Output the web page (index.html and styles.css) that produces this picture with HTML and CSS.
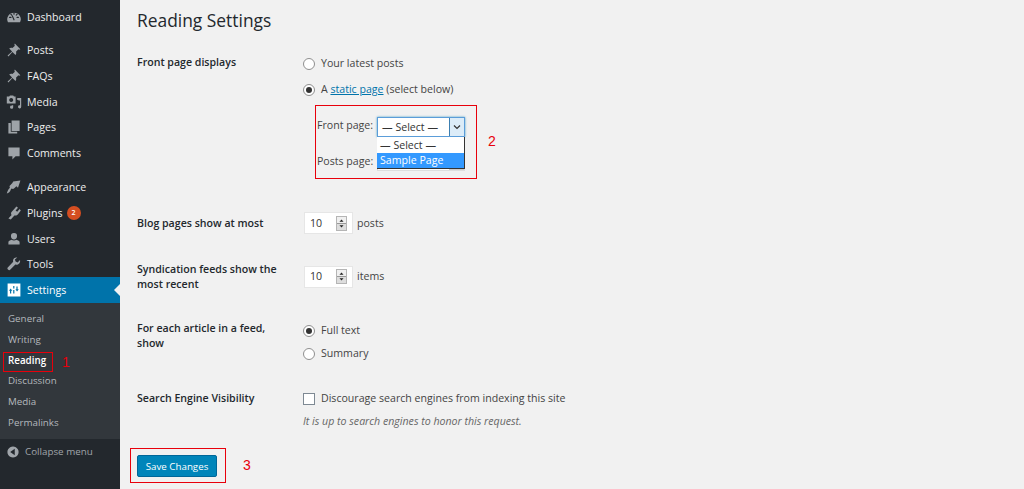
FILE: index.html
```html
<!DOCTYPE html>
<html lang="en">
<head>
<meta charset="utf-8">
<title>Reading Settings</title>
<link rel="stylesheet" href="styles.css">
</head>
<body>
<div class="app">
  <nav class="sidebar">
    <ul class="menu first">
      <li><svg class="ico" viewBox="0 0 20 20"><path d="M2.500 16.500a8.500 8 0 1 1 15 0z"/><path d="M6 6.500l1.200 1.200M10 4.500v2M14 6.500l-1.200 1.200M4.500 10.500h1.700M13.800 10.500h1.700M10 13.500l-2.200-5" stroke="#23282d" stroke-width="1.400" stroke-linecap="round" fill="none"/></svg>Dashboard</li>
    </ul>
    <ul class="menu">
      <li><svg class="ico" viewBox="0 0 20 20"><path d="M11 2l7 7-1.500.8-1-.8-3 3.200c.6 1.500.3 3-.6 4L8 12.400 3 18l-1-1 5.600-5L4 8.200c1-.9 2.500-1.200 4-.6l3.200-3-.8-1z"/></svg>Posts</li>
      <li><svg class="ico" viewBox="0 0 20 20"><path d="M11 2l7 7-1.500.8-1-.8-3 3.200c.6 1.500.3 3-.6 4L8 12.400 3 18l-1-1 5.600-5L4 8.200c1-.9 2.500-1.200 4-.6l3.200-3-.8-1z"/></svg>FAQs</li>
      <li><svg class="ico" viewBox="0 0 20 20"><path fill-rule="evenodd" d="M1 3h3l1-1h4l1 1h2v9H1zM6.500 5a2.500 2.500 0 1 0 .01 0zM14 5h5v11a2 2 0 1 1-1.500-1.900V8h-2v-.5H14zM9 14v2.500a2 2 0 1 1-1.500-1.900V14z"/></svg>Media</li>
      <li><svg class="ico" viewBox="0 0 20 20"><path d="M7 2h10v13H7zM3 5h3v11h8v2H3z"/></svg>Pages</li>
      <li><svg class="ico" viewBox="0 0 20 20"><path d="M3 3h14v11h-5l-4 4v-4H3z"/></svg>Comments</li>
    </ul>
    <ul class="menu">
      <li><svg class="ico" viewBox="0 0 20 20"><path d="M9 3l9-1-3 9-2-2-3 3c-1 1-2 .5-3 0l-1 1c-.5 3-3 4.500-5 5 1-2 1-4 3-6l1-1c-.500-1-1-2 0-3l3-3z"/></svg>Appearance</li>
      <li><svg class="ico" viewBox="0 0 20 20"><path d="M13 2l2 1.500-3 3.500 2 1.500 3-3.500 1.500 2-3.500 4.500c-1 1.500-3 2-4.500 1.500L6 18l-3-1 4-4.500C6 11 6 9 7.500 8z"/></svg>Plugins<span class="badge">2</span></li>
      <li><svg class="ico" viewBox="0 0 20 20"><path d="M10 2.500a3.800 3.800 0 0 1 3.800 4c0 2.500-1.500 4-3.800 4s-3.800-1.500-3.800-4a3.800 3.800 0 0 1 3.800-4zM3 17v-3c0-1.500 2-2.500 4-3 1.500 1.200 4.500 1.200 6 0 2 .5 4 1.500 4 3v3z"/></svg>Users</li>
      <li><svg class="ico" viewBox="0 0 20 20"><path d="M17.500 5l-3 3-2.500-1-.9-2.500 3-2.500c-2.500-.7-5 .8-5.300 3.300-.1.800 0 1.500.2 2L2.500 14c-1 1-1 2 0 3s2.200 1 3 0l6.200-6.300c2.800.9 6.800-1.200 5.800-5.700z"/></svg>Tools</li>
      <li class="current"><svg class="ico" viewBox="0 0 20 20"><path fill-rule="evenodd" d="M2 2h16v16H2zM5 14.500h1.500V11H8L5.700 8 3.800 11H5zM13 5.500h1.500V9H16l-2.200 3-2-3H13zM9 8h1.500V5H9zM9 14.500h1.500V10H9z"/></svg>Settings</li>
    </ul>
    <ul class="submenu">
      <li>General</li>
      <li>Writing</li>
      <li class="active">Reading<span class="mark mark-one"></span><span class="num num-one">1</span></li>
      <li>Discussion</li>
      <li>Media</li>
      <li>Permalinks</li>
    </ul>
    <div class="collapse"><svg class="ico-small" viewBox="0 0 20 20"><path fill-rule="evenodd" d="M10 2a8 8 0 1 1-.01 0zM12.500 5.500L6 10l6.500 4.500z"/></svg>Collapse menu</div>
  </nav>

  <main class="content">
    <h1>Reading Settings</h1>

    <section class="row row-front">
      <div class="label">Front page displays</div>
      <div class="field">
        <div class="option"><span class="radio"></span>Your latest posts</div>
        <div class="option second"><span class="radio on"></span><span>A <a href="#">static page</a> (select below)</span></div>
        <div class="pickers">
          <div class="picker picker-one">
            <span class="picker-label">Front page:</span>
            <div class="select"><span class="select-text">— Select —</span><span class="select-btn"><svg viewBox="0 0 10 10"><path d="M2 3.500l3 3 3-3" fill="none" stroke="#333" stroke-width="1.200"/></svg></span>
              <div class="dropdown">
                <div class="dd-item">— Select —</div>
                <div class="dd-item hl">Sample Page</div>
              </div>
            </div>
          </div>
          <div class="picker picker-two">
            <span>Posts page:</span>
            <div class="select-behind"><span class="behind-btn"></span></div>
          </div>
          <span class="mark mark-two"></span><span class="num num-two">2</span>
        </div>
      </div>
    </section>

    <section class="row row-blog">
      <div class="label">Blog pages show at most</div>
      <div class="field inline"><span class="number"><span>10</span><span class="spin"><svg viewBox="0 0 11 15"><path d="M5.500 2.500l2.500 3H3zM5.500 12.500l2.500-3H3z" fill="#222"/></svg></span></span>posts</div>
    </section>

    <section class="row row-feed">
      <div class="label">Syndication feeds show the most recent</div>
      <div class="field inline"><span class="number"><span>10</span><span class="spin"><svg viewBox="0 0 11 15"><path d="M5.500 2.500l2.500 3H3zM5.500 12.500l2.500-3H3z" fill="#222"/></svg></span></span>items</div>
    </section>

    <section class="row row-article">
      <div class="label">For each article in a feed, show</div>
      <div class="field">
        <div class="option"><span class="radio on"></span>Full text</div>
        <div class="option third"><span class="radio"></span>Summary</div>
      </div>
    </section>

    <section class="row row-search">
      <div class="label">Search Engine Visibility</div>
      <div class="field">
        <div class="option"><span class="check"></span>Discourage search engines from indexing this site</div>
        <p class="note">It is up to search engines to honor this request.</p>
      </div>
    </section>

    <div class="actions">
      <button class="save" type="button">Save Changes</button>
      <span class="mark mark-three"></span><span class="num num-three">3</span>
    </div>
  </main>
</div>
</body>
</html>
```

FILE: styles.css
```css
* { box-sizing: border-box; }
html, body { margin: 0; height: 100%; }
body {
  font-family: "Open Sans", sans-serif;
  font-size: 10.600px;
  color: #444;
  background: #f1f1f1;
  overflow: hidden;
}
.app { display: flex; height: 489px; }

/* sidebar */
.sidebar { width: 120px; flex: none; background: #23282d; color: #eee; }
.menu, .submenu { list-style: none; margin: 0; padding: 0; }
.menu.first { padding-top: 4px; margin-bottom: 8px; }
.menu + .menu { margin-top: 9px; }
.menu.first + .menu { margin-top: 0; }
.menu li {
  position: relative;
  display: flex;
  align-items: center;
  height: 25.6px;
  color: #eee;
}
.ico { width: 16px; height: 16px; margin: 0 5px 0 6px; fill: #9ea3a8; flex: none; }
.menu .current { background: #0073aa; color: #fff; }
.current .ico { fill: #fff; }
.current::after {
  content: "";
  position: absolute;
  right: 0;
  top: 7px;
  border: 6px solid transparent;
  border-right-color: #f1f1f1;
  border-left-width: 0;
}
.badge {
  width: 14px;
  height: 14px;
  margin-left: 4px;
  border-radius: 50%;
  background: #d54e21;
  color: #fff;
  font-size: 7px;
  font-weight: 600;
  line-height: 14px;
  text-align: center;
}
.submenu { background: #32373c; padding: 6.400px 0 4.800px; }
.submenu li {
  position: relative;
  height: 20.8px;
  padding-left: 8px;
  font-size: 9.800px;
  line-height: 20.800px;
  color: #b4b9be;
}
.submenu .active { color: #fff; font-weight: 600; }
.collapse {
  display: flex;
  align-items: center;
  height: 26px;
  font-size: 9.800px;
  color: #a0a5aa;
}
.ico-small { width: 14px; height: 14px; margin: 0 5px 0 6px; fill: #a0a5aa; }

/* annotations */
.mark { position: absolute; border: 1px solid #e8000b; pointer-events: none; }
.num { position: absolute; color: #e8000b; font-family: "Liberation Sans", sans-serif; font-size: 14px; font-weight: 400; line-height: 16px; }
.mark-one { left: 3px; top: 1px; width: 50px; height: 20px; }
.num-one { left: 62px; top: 3px; }
.mark-two { left: 12px; top: 0; width: 162px; height: 74px; }
.num-two { left: 185px; top: 28px; }
.mark-three { left: 10px; top: 0; width: 96px; height: 35px; }
.num-three { left: 123px; top: 9px; }

/* content */
.content { flex: 1; min-width: 0; padding-left: 17px; }
h1 { margin: 0; padding-top: 8px; font-size: 17.400px; font-weight: 400; line-height: 24px; color: #23282d; }
.row { display: grid; grid-template-columns: 166px 1fr; }
.label { font-weight: 600; line-height: 15px; color: #23282d; padding-right: 20px; }
.field { line-height: 15px; }
.row-front { margin-top: 23px; }
.row-front .field { padding-top: 1px; }
.row-blog { margin-top: 33px; }
.row-feed { margin-top: 27px; }
.row-article { margin-top: 31px; }
.row-search { margin-top: 30px; }
.row-blog .label { padding-top: 4px; }
.row-feed .label { padding-top: 1px; }
.row-article .label { margin-top: -2px; }
.option { display: flex; align-items: center; height: 15px; }
.option.second { margin-top: 11px; }
.option.third { margin-top: 8px; }
.radio, .check {
  width: 12px;
  height: 12px;
  margin-right: 6px;
  border: 1px solid #8f8f8f;
  background: #fff;
  flex: none;
}
.radio { border-radius: 50%; position: relative; }
.radio.on::after {
  content: "";
  position: absolute;
  inset: 2px;
  border-radius: 50%;
  background: #333;
}
a { color: #0073aa; }
.pickers { position: relative; margin-top: 8px; height: 74px; }
.picker { display: flex; align-items: center; position: absolute; left: 14px; }
.picker-one { top: 12px; z-index: 2; }
.picker-one .picker-label { margin-top: -3px; }
.picker-two { top: 46px; }
.select, .select-behind {
  position: relative;
  display: flex;
  align-items: stretch;
  flex: none;
  width: 88px;
  height: 20px;
  margin-left: 4px;
  background: #fff;
}
.select {
  border: 1px solid #5b9dd9;
  box-shadow: 0 0 2px rgba(30, 140, 190, .8);
}
.select-behind { border: 1px solid #ddd; justify-content: flex-end; }
.behind-btn { width: 15px; background: #ccc; }
.select-text { flex: 1; padding-left: 4px; line-height: 18px; color: #333; }
.select-btn { width: 15px; border-left: 1px solid #3c7fb1; background: #dcecf8; display: flex; align-items: center; justify-content: center; }
.select-btn svg { width: 10px; height: 10px; }
.dropdown {
  position: absolute;
  left: -1px;
  top: 19px;
  width: 88px;
  background: #fff;
  border-bottom: 1px solid #333;
  border-right: 1px solid #333;
  z-index: 2;
}
.dd-item { height: 16px; padding-left: 3px; line-height: 16px; color: #333; }
.dd-item.hl { height: 15px; line-height: 15px; background: #3399ff; color: #fff; }

.inline { display: flex; align-items: center; }
.number {
  display: flex;
  align-items: center;
  justify-content: space-between;
  width: 49px;
  height: 22px;
  margin: 0 4px 0 1px;
  padding: 0 5px 0 5px;
  background: #fff;
  border: 1px solid #e6e6e6;
  color: #333;
}
.spin { width: 11px; height: 15px; }
.spin svg {
  display: block;
  width: 11px;
  height: 15px;
  border: 1px solid #b5b5b5;
  background: linear-gradient(#f0f0f0 48%, #999 48%, #999 52%, #ddd 52%);
}
.check { border-color: #7e8993; }
.note { margin: 8px 0 0; font-style: italic; color: #666; }

.actions { position: relative; height: 35px; margin: 19px 0 0 -17px; padding: 7px 0 0 17px; }
.save {
  width: 80px;
  height: 22px;
  padding: 0;
  font: 400 9.750px "Open Sans", sans-serif;
  color: #fff;
  background: #0085ba;
  border: 1px solid #006799;
  border-radius: 2px;
}
```
